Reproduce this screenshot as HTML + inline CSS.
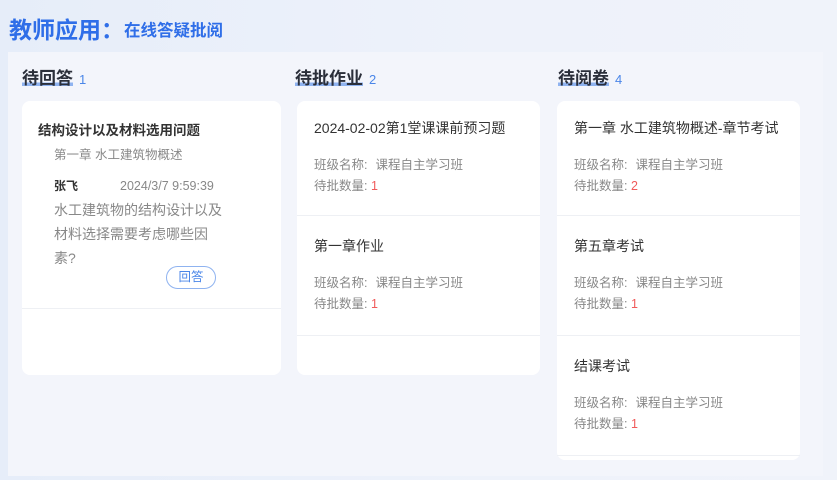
<!DOCTYPE html>
<html><head><meta charset="utf-8"><style>
*{margin:0;padding:0;box-sizing:border-box}
body{width:837px;height:480px;overflow:hidden;background:linear-gradient(90deg,#e6edf9,#eef2fa 60%,#f0f3fa);font-family:"Liberation Sans","Noto Sans CJK SC",sans-serif;position:relative}
.h1{position:absolute;left:9px;top:11px;color:#2f6ee8;font-weight:bold;font-size:23px}
.h1 small{font-size:16.5px;margin-left:0px;vertical-align:2px}
.panel{position:absolute;left:8px;top:52px;width:815px;height:424px;background:#f3f5fb}
.t{position:absolute;top:64px;font-size:17px;font-weight:bold;color:#2b2f3a}
.t span.hl{background:linear-gradient(transparent 72%,#8fb3f0 72%,#8fb3f0 90%,transparent 90%)}
.t .n{font-size:13px;color:#4a86e8;font-weight:normal;margin-left:6px}
.card{position:absolute;background:#fff;border-radius:8px;top:101px}
.item{height:115px;border-bottom:1px solid #eef0f4;padding:17px 17px 0}
.item+.item{height:120px;padding-top:20px}
.it{font-size:14px;color:#333;margin-bottom:17px}
.ln{font-size:12.5px;color:#888;line-height:21px}
.ln b{font-weight:normal;margin-left:8px}
.r{color:#f05a5a}
</style></head><body>
<div class="h1">教师应用：<small>在线答疑批阅</small></div>
<div class="panel"></div>
<div class="t" style="left:22px"><span class="hl">待回答</span><span class="n">1</span></div>
<div class="t" style="left:295px"><span class="hl">待批作业</span><span class="n">2</span></div>
<div class="t" style="left:558px"><span class="hl">待阅卷</span><span class="n">4</span></div>

<div class="card" style="left:22px;width:259px;height:274px">
<div style="height:208px;border-bottom:1px solid #eef0f4;padding:18px 0 0 16px;position:relative">
<div style="font-size:13.5px;font-weight:bold;color:#333">结构设计以及材料选用问题</div>
<div style="font-size:12.5px;color:#888;margin:5px 0 0 16px">第一章 水工建筑物概述</div>
<div style="font-size:12px;margin:14px 0 0 16px;color:#333"><b>张飞</b><span style="color:#888;margin-left:42px;font-size:12.5px">2024/3/7 9:59:39</span></div>
<div style="font-size:14px;color:#888;line-height:24px;margin:4px 0 0 16px;width:170px">水工建筑物的结构设计以及材料选择需要考虑哪些因素?</div>
<div style="position:absolute;left:144px;top:165px;width:50px;height:23px;border:1px solid #8fb3f0;border-radius:12px;color:#4a86e8;font-size:12.5px;text-align:center;line-height:21px">回答</div>
</div></div>

<div class="card" style="left:297px;width:243px;height:274px">
<div class="item"><div class="it">2024-02-02第1堂课课前预习题</div><div class="ln">班级名称:<b>课程自主学习班</b></div><div class="ln">待批数量: <span class="r">1</span></div></div>
<div class="item"><div class="it">第一章作业</div><div class="ln">班级名称:<b>课程自主学习班</b></div><div class="ln">待批数量: <span class="r">1</span></div></div>
</div>

<div class="card" style="left:557px;width:243px;height:359px">
<div class="item"><div class="it">第一章 水工建筑物概述-章节考试</div><div class="ln">班级名称:<b>课程自主学习班</b></div><div class="ln">待批数量: <span class="r">2</span></div></div>
<div class="item"><div class="it">第五章考试</div><div class="ln">班级名称:<b>课程自主学习班</b></div><div class="ln">待批数量: <span class="r">1</span></div></div>
<div class="item"><div class="it">结课考试</div><div class="ln">班级名称:<b>课程自主学习班</b></div><div class="ln">待批数量: <span class="r">1</span></div></div>
</div>
</body></html>
